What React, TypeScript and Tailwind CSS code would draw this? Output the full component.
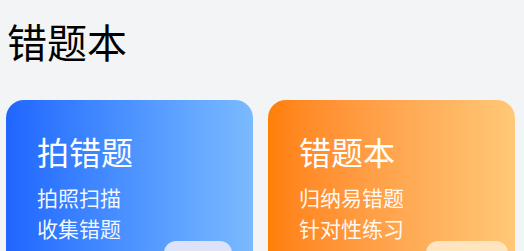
import React from 'react';

const cards = [
  {
    title: '拍错题',
    lines: ['拍照扫描', '收集错题'],
    bg: 'bg-gradient-to-r from-[#2065ff] to-[#7bbaff]',
    btn: 'bg-[#dde2fb] w-[68px]',
  },
  {
    title: '错题本',
    lines: ['归纳易错题', '针对性练习'],
    bg: 'bg-gradient-to-r from-[#ff7f05] to-[#ffc878]',
    btn: 'bg-[#ffe5bf] w-[82px]',
  },
];

export default function App() {
  return (
    <div
      className="w-[524px] h-[251px] overflow-hidden bg-[#f3f4f6]"
      style={{ fontFamily: '"Noto Sans CJK SC", "Noto Sans", sans-serif' }}>
      <h1 className="pl-[7px] pt-[18px] text-[40px] leading-[46px] font-normal text-black">错题本</h1>

      {/* Cards */}
      <div className="flex gap-[15px] pl-[6px] mt-[36px]">
        {cards.map((card) =>
        <div
          key={card.title}
          className={`w-[247px] h-[170px] rounded-[18px] ${card.bg} pt-[30px] text-white`}>
            <div className="pl-[31px]">
              <div className="text-[32px] leading-[42px]">{card.title}</div>
              <div className="mt-[10px] text-[21px] leading-[31px] text-white/95">
                {card.lines.map((l) => <div key={l}>{l}</div>)}
              </div>
            </div>
            <div className="-mt-[3px] pl-[158px]">
              <div className={`h-[30px] rounded-[12px] ${card.btn}`} />
            </div>
          </div>
        )}
      </div>
    </div>);
}
